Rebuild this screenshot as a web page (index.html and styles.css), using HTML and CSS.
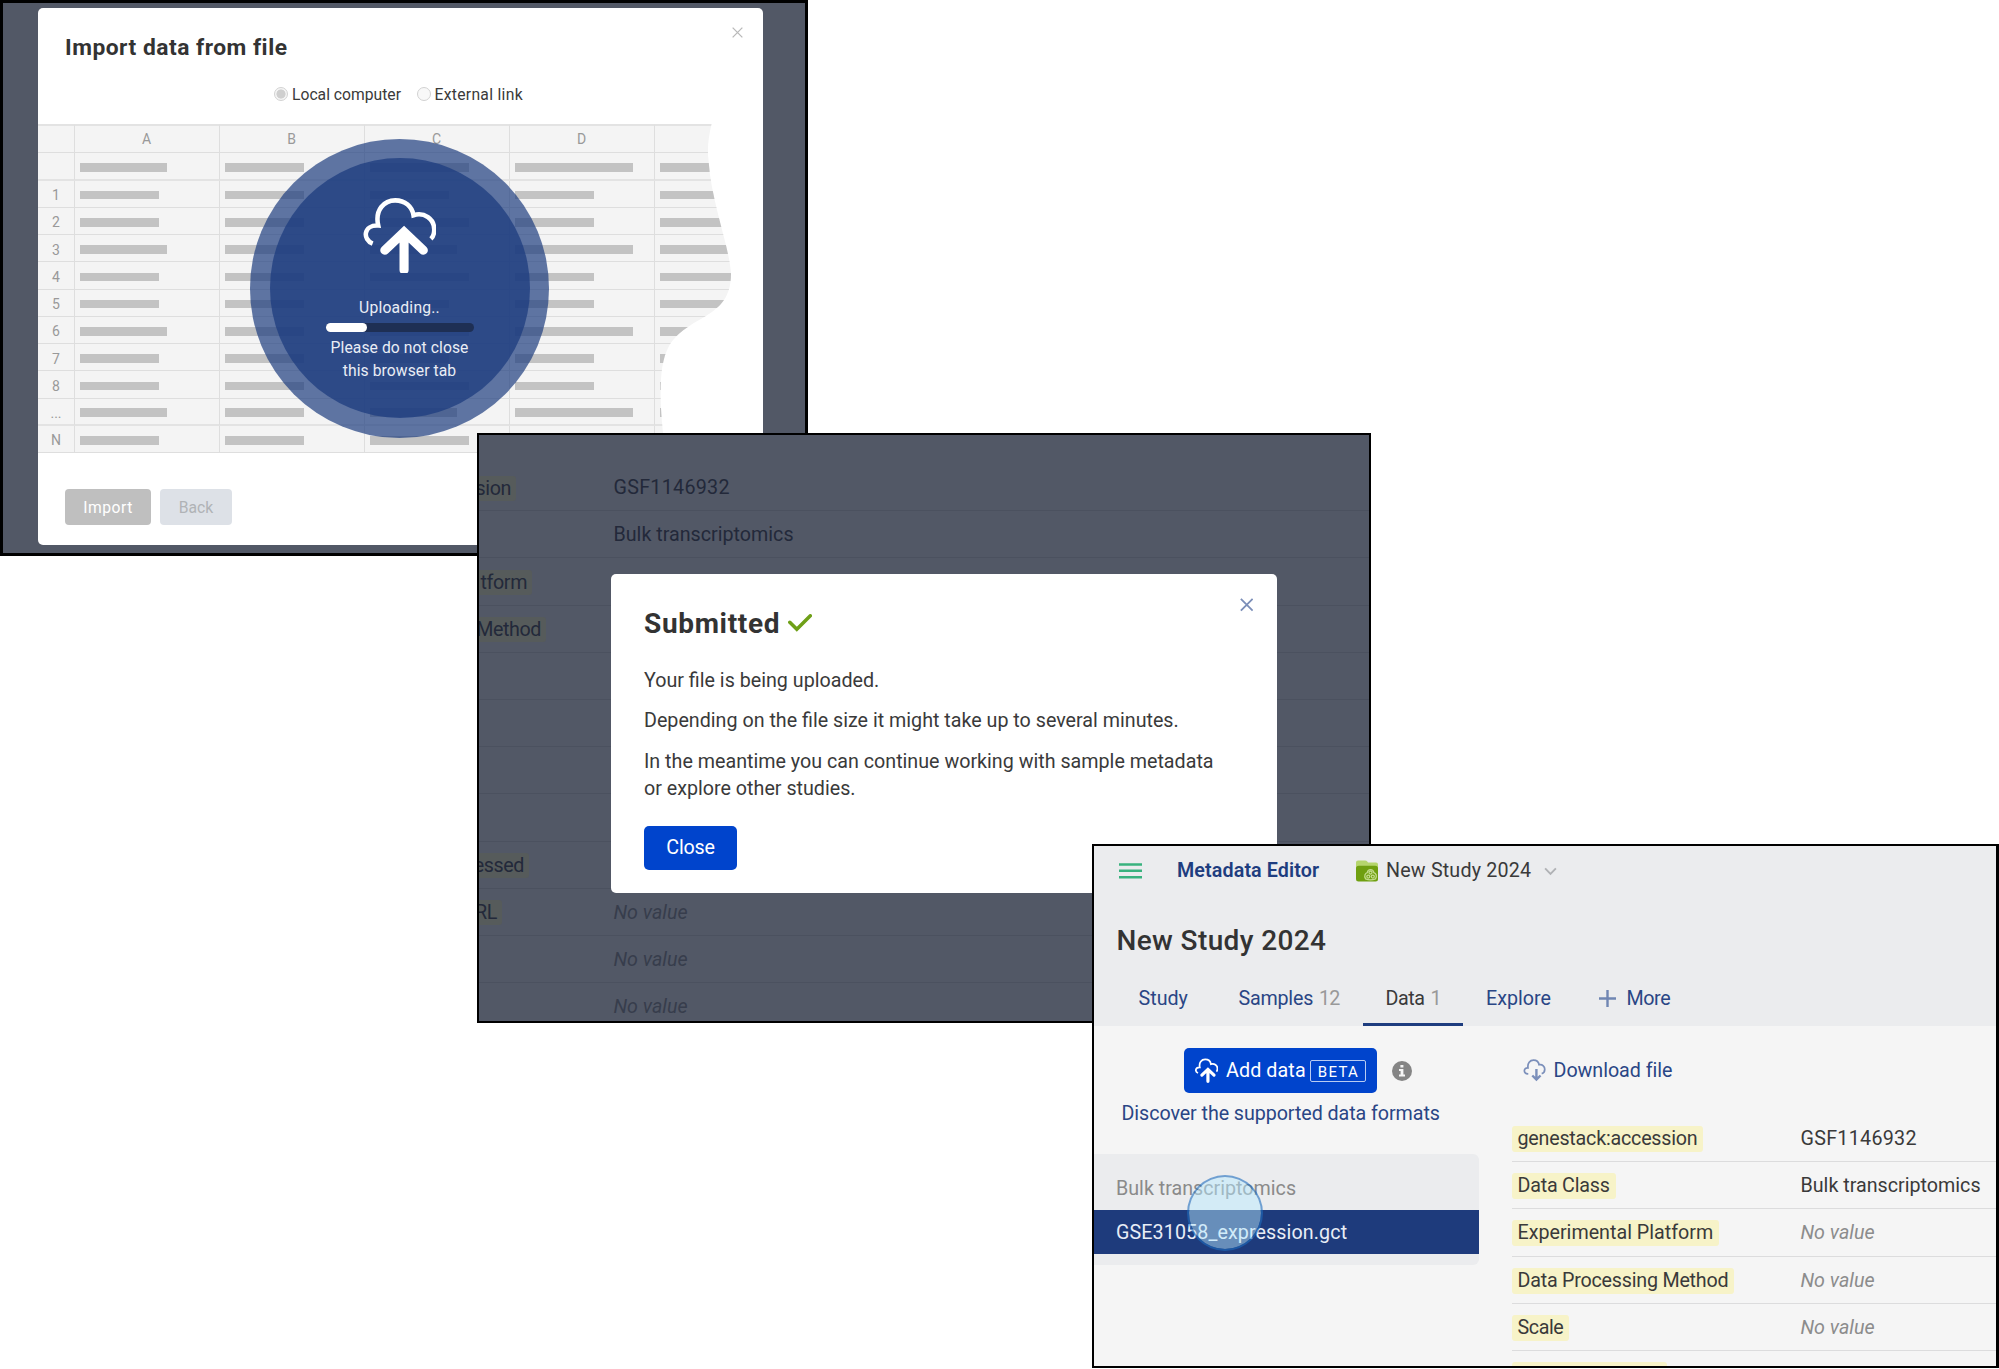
FILE: index.html
```html
<!DOCTYPE html>
<html lang="en">
<head>
<meta charset="utf-8">
<title>Data upload flow</title>
<link rel="stylesheet" href="styles.css">
</head>
<body>
<main class="canvas">

<section class="window window-import">
  <div class="import-dialog">
    <svg class="import-close" viewBox="0 0 12 12"><path d="M.7.7l10.6 10.6M11.3.7L.7 11.3"/></svg>
    <h2 class="import-title">Import data from file</h2>
    <div class="radios">
      <label class="radio"><span class="dot dot-on"></span><span>Local computer</span></label>
      <label class="radio"><span class="dot"></span><span class="ls3">External link</span></label>
    </div>
    <div class="sheet" id="sheet"></div>
    <div class="import-actions">
      <button class="btn-grey ls3">Import</button>
      <button class="btn-pale">Back</button>
    </div>
    <div class="upload-ring">
      <div class="upload-disc">
        <svg class="upload-icon" viewBox="0 0 72 76"><path class="cloud" d="M9.5 47C-.5 43 0 28.500 15 29.200C11.500 13.500 21 4.300 31.800 4.300C41.500 4.300 48.500 10.500 49.800 19C60.500 15.500 70.300 23 70.300 33C70.300 36.500 69.500 40 67 42.300"/><path class="arrow" d="M40.500 73V37M21.500 53.500L40.500 35.500L59.500 53.500"/></svg>
        <div class="upload-label">Uploading..</div>
        <div class="progress"><div class="progress-fill"></div></div>
        <div class="upload-note">Please do not close<br>this browser tab</div>
      </div>
    </div>
  </div>
</section>

<section class="window window-submitted">
  <div class="dim-table">
    <div class="dim-row"><div class="dim-label"><span class="dim-tag" style="width:37px">sion</span></div><div class="ls3">GSF1146932</div></div>
    <div class="dim-row"><div class="dim-label"></div><div>Bulk transcriptomics</div></div>
    <div class="dim-row"><div class="dim-label"><span class="dim-tag" style="width:53px">tform</span></div></div>
    <div class="dim-row"><div class="dim-label"><span class="dim-tag" style="width:67px">Method</span></div></div>
    <div class="dim-row"></div>
    <div class="dim-row"></div>
    <div class="dim-row"></div>
    <div class="dim-row"></div>
    <div class="dim-row"><div class="dim-label"><span class="dim-tag" style="width:50px">essed</span></div></div>
    <div class="dim-row"><div class="dim-label"><span class="dim-tag" style="width:23px">RL</span></div><div class="dim-none">No value</div></div>
    <div class="dim-row"><div class="dim-label"></div><div class="dim-none">No value</div></div>
    <div class="dim-row"><div class="dim-label"></div><div class="dim-none">No value</div></div>
  </div>
  <div class="submitted-dialog">
    <svg class="submitted-close" viewBox="0 0 14 14"><path d="M.9.9l12.200 12.200M13.100.9L.9 13.100"/></svg>
    <h2 class="submitted-title"><span>Submitted</span><svg class="check" viewBox="0 0 24 18"><path d="M1.800 8.300L8.800 15.300L22.300 1.800"/></svg></h2>
    <p>Your file is being uploaded.</p>
    <p>Depending on the file size it might take up to several minutes.</p>
    <p>In the meantime you can continue working with sample metadata<br>or explore other studies.</p>
    <button class="btn-close">Close</button>
  </div>
</section>

<section class="window window-editor">
  <header class="editor-head">
    <div class="topbar">
      <svg class="burger" viewBox="0 0 23 16"><path d="M0 1.500h23M0 7.800h23M0 14.200h23"/></svg>
      <span class="app-name">Metadata Editor</span>
      <svg class="folder" viewBox="0 0 22 22"><path fill="#b5d56d" d="M0 2.500Q0 .5 2 .5H9Q10.500 .5 11.500 1.800L12 2.500H20Q22 2.500 22 4.500V14H0Z"/><path fill="#6f9f10" d="M0 8.500Q0 5.700 2.800 5.700H19.200Q22 5.700 22 8.500V19Q22 21.500 19.500 21.500H2.500Q0 21.500 0 19Z"/><g fill="none" stroke="#c3dc8b" stroke-width="1.300"><path d="M9.500 18.800C7.800 15.500 9.300 13.300 11.300 12.700C11.800 8.700 17.200 8.700 17.800 12.700C20.200 13.500 21.200 16 19.500 18.800Q14.500 21 9.500 18.800Z"/><circle cx="14.500" cy="12.500" r="1.500"/><circle cx="12.300" cy="16.600" r="1.500"/><circle cx="16.800" cy="16.600" r="1.500"/></g></svg>
      <span class="crumb">New Study 2024</span>
      <svg class="chevron" viewBox="0 0 14 9"><path d="M1.200 1.200L7 7.200L12.800 1.200"/></svg>
    </div>
    <h1 class="study-title">New Study 2024</h1>
    <nav class="tabs">
      <a class="tab tab-study">Study</a>
      <a class="tab tab-samples"><span class="tight">Samples</span><span class="count">12</span></a>
      <a class="tab tab-data"><span class="tighter">Data</span><span class="count">1</span></a>
      <a class="tab tab-explore">Explore</a>
      <a class="tab tab-more"><svg class="plus" viewBox="0 0 17 17"><path d="M8.500 0V17M0 8.500H17"/></svg><span class="tighter">More</span></a>
    </nav>
  </header>
  <div class="editor-body">
    <aside class="files">
      <div class="add-row">
        <button class="btn-add"><svg class="add-icon" viewBox="0 0 72 76"><path class="cloud" d="M9.500 47C-.5 43 0 28.500 15 29.200C11.500 13.500 21 4.300 31.800 4.300C41.500 4.300 48.500 10.500 49.800 19C60.500 15.500 70.300 23 70.300 33C70.300 36.500 69.500 40 67 42.300"/><path class="arrow" d="M40.500 73V37M21.500 53.500L40.500 35.500L59.500 53.500"/></svg><span class="add-text">Add data</span><span class="beta">BETA</span></button>
        <svg class="info" viewBox="0 0 20 20"><circle cx="10" cy="10" r="10" fill="#858585"/><path fill="#f5f5f5" d="M8.400 4h3v2.600h-3zM7 8h4.400v5.600H13V15.500H7V13.600H8.600V9.900H7z"/></svg>
      </div>
      <a class="formats">Discover the supported data formats</a>
      <div class="group">
        <div class="group-name">Bulk transcriptomics</div>
        <div class="file">GSE31058_expression.gct</div>
        <div class="pointer"></div>
      </div>
    </aside>
    <div class="details">
      <a class="download"><svg class="download-icon" viewBox="0 0 24 24"><path d="M5.500 15.500H5C.2 15.500.2 8.800 5.200 9.200C4.500 4.200 7.300 1.200 11 1.200C14.200 1.200 16.300 3.200 16.800 6C20.500 5.300 22.700 8 22.700 10.800C22.700 13 21.500 14.800 19.500 15.300"/><path class="down" d="M14 10.500V21M9.700 17.200L14 21.500L18.300 17.200"/></svg><span>Download file</span></a>
      <div class="attrs">
        <div class="attr"><div class="attr-name"><span class="tag tight">genestack:accession</span></div><div class="ls3">GSF1146932</div></div>
        <div class="attr"><div class="attr-name"><span class="tag tight">Data Class</span></div><div>Bulk transcriptomics</div></div>
        <div class="attr"><div class="attr-name"><span class="tag">Experimental Platform</span></div><div class="none">No value</div></div>
        <div class="attr"><div class="attr-name"><span class="tag tight">Data Processing Method</span></div><div class="none">No value</div></div>
        <div class="attr"><div class="attr-name"><span class="tag tighter">Scale</span></div><div class="none">No value</div></div>
        <div class="attr"><div class="attr-name"><span class="tag tag-cut"></span></div></div>
      </div>
    </div>
  </div>
</section>

</main>
<script src="sheet.js"></script>
</body>
</html>
```
FILE: sheet.js
```javascript
// Builds the placeholder spreadsheet: one bar width per cell and row.
const rows = [
  ["", 87, 79, 99, 118], ["1", 79, 79, 79, 79], ["2", 79, 79, 99, 79],
  ["3", 87, 79, 87, 118], ["4", 79, 79, 99, 79], ["5", 79, 79, 79, 79],
  ["6", 87, 79, 99, 118], ["7", 79, 79, 79, 79], ["8", 79, 79, 99, 79],
  ["...", 87, 79, 87, 118], ["N", 79, 79, 99, 79]
];
const head = ["", "A", "B", "C", "D", ""].map(c => `<div class="cell head">${c}</div>`).join("");
const body = rows.map(([n, ...w]) =>
  `<div class="cell num">${n}</div>` +
  [...w, 76].map(x => `<div class="cell"><i class="bar" style="width:${x}px"></i></div>`).join("")
).join("");
document.getElementById("sheet").innerHTML = head + body;
```
FILE: styles.css
```css
* { box-sizing: border-box; }
body {
  margin: 0;
  background: #fff;
  color: #3a3a3a;
  font: 19.7px/24px Roboto, "Noto Sans", sans-serif;
}
h1, h2, p { margin: 0; }
button { border: 0; padding: 0; font: inherit; }
svg { display: block; flex: none; }
.canvas { position: relative; width: 1999px; height: 1369px; overflow: hidden; }
.window { position: absolute; border: 2px solid #000; overflow: hidden; }
.ls3 { letter-spacing: .29px; }
.tight { letter-spacing: -.22px; }
.tighter { letter-spacing: -.42px; }

/* Import window */
.window-import {
  left: 0; top: 0; width: 808px; height: 556px;
  border-width: 3px; background: #525866;
  padding: 4.500px 0 0 34.500px;
}
.import-dialog {
  position: relative; width: 725px; height: 537px;
  padding-top: 25.800px; border-radius: 5px; background: #fff;
}
.import-close {
  position: absolute; left: 694.500px; top: 19.500px; width: 11px; height: 11px;
  fill: none; stroke: #b9b9b9; stroke-width: 1.400;
}
.import-title {
  margin-left: 27.500px; font-size: 22.800px; line-height: 30px;
  font-weight: 700; letter-spacing: .5px; color: #333;
}
.radios {
  display: flex; margin: 21.800px 0 19px 236.500px;
  font-size: 15.700px; line-height: 20px;
}
.radio { display: flex; align-items: center; gap: 4px; width: 142.500px; white-space: nowrap; }
.dot {
  flex: none; width: 14px; height: 14px; margin-top: -3px;
  border: 1px solid #d2d2d2; border-radius: 50%; background: #f8f8f8;
}
.dot-on { background: radial-gradient(circle, #cfcfcf 4.200px, #f5f5f5 4.900px); }
.sheet {
  display: grid; width: 694px; height: 329px; background: #f4f4f4;
  grid-template-columns: 37px 145px 145px 145px 145px 77px;
  grid-template-rows: 29px 27.500px repeat(10, 27.250px);
  font-size: 14px; line-height: 18px; color: #999;
  clip-path: path("M0 0H674C671 14 669.500 24 671 36C674 80 692 122 693.500 150C693.500 196 650 190 631 223C620 243 622 285 628 329H0Z");
}
.cell {
  display: flex; align-items: center; overflow: hidden;
  padding: 3px 0 0 5.500px;
  border-right: 1px solid #dedede; border-bottom: 1px solid #dedede;
}
.head, .num { justify-content: center; padding-left: 0; }
.head { padding-top: 0; border-top: 2px solid #e3e3e3; }
.num { padding-left: 1px; }
.cell:nth-child(n+7):nth-child(-n+12), .cell:nth-child(n+61):nth-child(-n+66) { border-bottom: 2px solid #e3e3e3; }
.bar { flex: none; height: 8.500px; background: #c3c3c3; }
.import-actions {
  display: flex; gap: 9px; margin: 36px 0 0 27.500px;
  font-size: 15.700px; line-height: 20px;
}
.btn-grey, .btn-pale { height: 36px; padding-top: 1px; border-radius: 4px; }
.btn-grey { width: 86px; background: #bfbfbf; color: #fff; letter-spacing: .5px; }
.btn-pale { width: 72px; background: #dde1e7; color: #b0b3b6; }
.upload-ring {
  position: absolute; left: 212.500px; top: 131px; width: 299px; height: 299px;
  padding: 19.500px; border-radius: 50%; background: rgba(30, 61, 127, .7);
}
.upload-disc {
  display: flex; flex-direction: column; align-items: center;
  width: 260px; height: 260px; padding-top: 37.500px;
  border-radius: 50%; background: rgba(30, 61, 127, .77);
  color: #e9edf5; font-size: 15.700px; line-height: 22.500px; text-align: center;
}
.upload-icon { width: 73px; height: 77px; }
.cloud { fill: none; stroke: #fff; stroke-width: 4.500; }
.arrow { fill: none; stroke: #fff; stroke-width: 9; stroke-linecap: round; }
.upload-label { margin-top: 24.500px; letter-spacing: .2px; }
.progress { width: 148px; height: 9px; margin: 3.500px 0 5px; border-radius: 5px; background: #1e2f54; }
.progress-fill { width: 41px; height: 9px; border-radius: 5px; background: #fff; }
.upload-note { letter-spacing: .07px; }

/* Submitted window */
.window-submitted {
  left: 477px; top: 433px; width: 894px; height: 590px;
  padding-top: 29px; background: #525866; color: #23293a;
}
.dim-row {
  display: flex; align-items: center; height: 47.200px; padding-top: 2px;
  border-bottom: 1px solid #4b515f;
}
.dim-label { width: 134.500px; flex: none; }
.dim-tag {
  display: flex; justify-content: flex-end; height: 25px; padding-right: 5px;
  overflow: hidden; border-radius: 0 3px 3px 0; background: #565b5b;
  line-height: 25px; letter-spacing: -.4px;
}
.dim-none { font-style: italic; color: #373d4c; }
.submitted-dialog {
  position: absolute; left: 132px; top: 139px; width: 666px; height: 319px;
  padding: 33px 0 0 33px; border-radius: 5px; background: #fff;
  color: #3a3a3a; line-height: 27.500px;
}
.submitted-close {
  position: absolute; left: 628.500px; top: 24px; width: 13.500px; height: 13.500px;
  fill: none; stroke: #7b8eb8; stroke-width: 1.900;
}
.submitted-title {
  display: flex; align-items: center; gap: 8px; margin-bottom: 25.500px;
  font-size: 28px; line-height: 34px; font-weight: 700; letter-spacing: .67px; color: #333;
}
.check { width: 24px; height: 18px; margin-top: -2px; fill: none; stroke: #6fa018; stroke-width: 3.500; stroke-linecap: round; }
.submitted-dialog p { margin-bottom: 13px; }
.btn-close {
  width: 93px; height: 44px; margin-top: 10px; padding-top: 1px; border-radius: 5px;
  background: #04c; color: #fff; letter-spacing: -.2px;
}

/* Editor window */
.window-editor {
  left: 1092px; top: 844px; width: 907px; height: 524px;
  border-right-width: 3px; background: #f5f5f5;
}
.editor-head { height: 180px; padding-top: 13px; background: #ebecee; }
.topbar { display: flex; align-items: center; height: 24px; padding-left: 24.500px; }
.burger { width: 23px; height: 16px; fill: none; stroke: #38b27e; stroke-width: 2.500; }
.app-name { width: 178.500px; margin-left: 35.500px; font-weight: 600; letter-spacing: .12px; color: #1e3d7f; }
.folder { width: 22px; height: 22px; }
.crumb { margin-left: 8.500px; letter-spacing: .18px; }
.chevron { width: 13px; height: 9px; margin-left: 13px; fill: none; stroke: #b0b2b5; stroke-width: 2; }
.study-title {
  margin: 41.400px 0 29px 22.500px; font-size: 28px; line-height: 34px;
  font-weight: 500; letter-spacing: .38px; color: #333;
}
.tabs { display: flex; margin-left: 21.500px; color: #2a4685; }
.tab { display: flex; height: 38.700px; padding-left: 23px; white-space: nowrap; }
.tab-study { width: 100px; }
.tab-samples { width: 147.500px; }
.tab-data { width: 100px; padding-left: 22.500px; border-bottom: 3px solid #1e3d7f; color: #3a3a3a; }
.tab-explore { width: 112px; }
.count { margin-left: 6px; letter-spacing: -.8px; color: #999; }
.plus { width: 17px; height: 17px; margin: 3px 10.500px 0 1px; fill: none; stroke: #7086b3; stroke-width: 2.400; }
.editor-body { display: flex; }
.files { width: 385px; margin-right: 33px; padding-top: 22px; flex: none; }
.add-row { display: flex; align-items: center; padding-left: 90px; }
.btn-add {
  display: flex; align-items: center; width: 193px; height: 45px; padding-left: 11px;
  border-radius: 5px; background: #04c; color: #fff; white-space: nowrap;
}
.add-icon { width: 23px; height: 24.300px; }
.add-text { width: 84px; margin-left: 8px; text-align: left; letter-spacing: .1px; }
.beta {
  width: 56px; height: 22px; padding-left: 1px; border: 1px solid #b9ccf2; border-radius: 2px;
  font-size: 15px; line-height: 22px; letter-spacing: 1.300px; text-align: center;
}
.add-icon .cloud { stroke-width: 5.500; }
.add-icon .arrow { stroke-width: 10; }
.info { width: 20px; height: 20px; margin-left: 15px; }
.formats { display: block; margin: 9.300px 0 28px 27.500px; letter-spacing: -.07px; color: #2a4685; white-space: nowrap; }
.group { position: relative; height: 110.500px; padding-top: 22.800px; border-radius: 0 6px 6px 0; background: #ebecee; }
.group-name { padding-left: 22px; color: #8a8a8a; }
.file {
  height: 44px; margin-top: 8.700px; padding-left: 22px; line-height: 46px;
  background: #1e3b7c; color: #e8edf6; letter-spacing: .1px;
}
.pointer {
  position: absolute; left: 93px; top: 20.500px; width: 76px; height: 76px;
  border: 2px solid rgba(28, 108, 190, .6); border-radius: 50%;
  background: rgba(183, 235, 254, .48); background-clip: padding-box;
}
.details { flex: 1; padding-top: 33.300px; }
.download { display: flex; align-items: center; gap: 8px; margin-left: 10.500px; letter-spacing: -.04px; color: #2a4685; }
.download-icon { width: 23px; height: 23px; margin-top: -2px; fill: none; stroke: #7b8fba; stroke-width: 1.800; }
.down { stroke-width: 2.500; }
.attrs { margin-top: 31.700px; }
.attr {
  display: flex; align-items: center; height: 47.200px; padding-top: 2px;
  border-bottom: 1px solid #dcdcdd; white-space: nowrap;
}
.attr-name { width: 288.500px; flex: none; }
.tag { display: inline-block; height: 26px; padding: 0 6px 0 5.500px; border-radius: 3px; background: #f7f3c8; line-height: 26px; vertical-align: top; }
.tag-cut { width: 154.500px; }
.none { font-style: italic; color: #8c8c8c; }
```
